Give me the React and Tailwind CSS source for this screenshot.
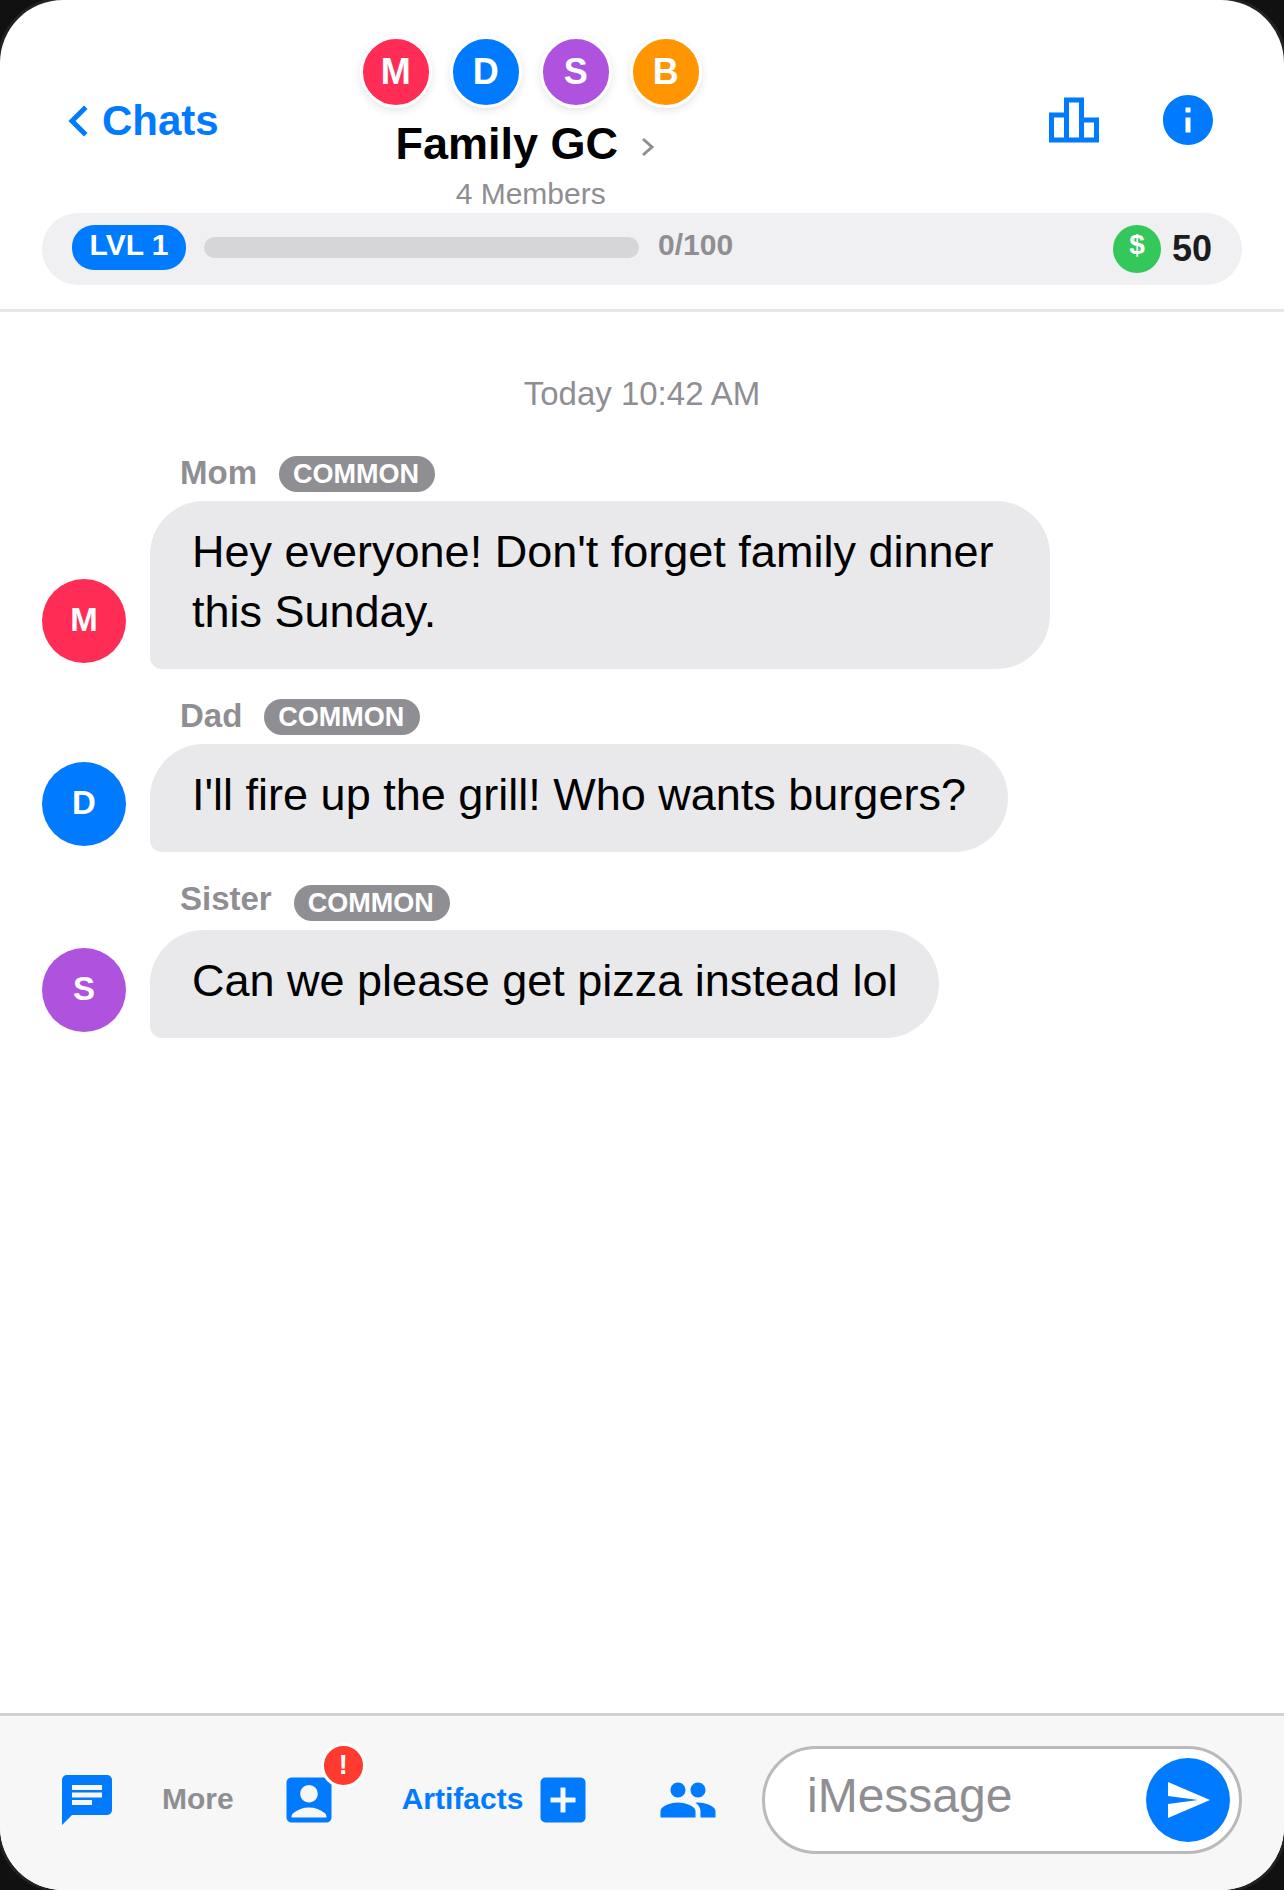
import React from 'react';
import { MdAccountBox, MdAddBox, MdChat, MdInfo, MdOutlineLeaderboard, MdPeople, MdSend } from 'react-icons/md';

const members = [
  { letter: 'M', color: 'bg-[#ff2d55]' },
  { letter: 'D', color: 'bg-[#007aff]' },
  { letter: 'S', color: 'bg-[#af52de]' },
  { letter: 'B', color: 'bg-[#ff9500]' },
];

const messages = [
  {
    name: 'Mom',
    letter: 'M',
    color: 'bg-[#ff2d55]',
    text: "Hey everyone! Don't forget family dinner this Sunday.",
    rowClass: 'mt-0',
    nameClass: 'mb-[2px]',
    headClass: 'mb-[9px]',
  },
  {
    name: 'Dad',
    letter: 'D',
    color: 'bg-[#007aff]',
    text: "I'll fire up the grill! Who wants burgers?",
    rowClass: 'mt-[30px]',
    nameClass: 'mb-[2px]',
    headClass: 'mb-[9px]',
  },
  {
    name: 'Sister',
    letter: 'S',
    color: 'bg-[#af52de]',
    text: 'Can we please get pizza instead lol',
    rowClass: 'mt-[30px]',
    nameClass: 'mb-[8px]',
    headClass: 'mb-[6px]',
  },
];

const Message = ({ message }) => (
  <div className={`flex items-end gap-[24px] ${message.rowClass}`}>
    <div className={`w-[84px] h-[84px] mb-[6px] shrink-0 rounded-full flex items-center justify-center text-white text-[33px] font-bold pb-[3px] ${message.color}`}>
      {message.letter}
    </div>
    <div className="flex flex-col items-start">
      <div className={`flex items-center pl-[30px] ${message.headClass}`}>
        <span className={`text-[33px] leading-[34px] font-bold text-[#8e8e93] mr-[22px] ${message.nameClass}`}>
          {message.name}
        </span>
        <span className="h-[36px] pl-[14px] pr-[16px] rounded-[18px] bg-[#8e8e93] text-white text-[27px] font-bold flex items-center">
          COMMON
        </span>
      </div>
      <div className="max-w-[900px] px-[42px] pt-[21px] pb-[27px] rounded-[54px] rounded-bl-[12px] bg-[#e9e9eb] text-black text-[45px] leading-[60px]">
        {message.text}
      </div>
    </div>
  </div>
);

export default function App() {
  return (
    <div className="w-[1284px] h-[1890px] bg-[#111111] font-['Liberation_Sans',Arial,sans-serif]">
      <div className="w-full h-full flex flex-col overflow-hidden rounded-[63px] bg-white shadow-[0_0_0_3px_#222222]">
        {/* Header */}
        <div className="h-[312px] shrink-0 border-b-[3px] border-[#e5e5ea] px-[42px]">
          <div className="h-[213px] flex items-start">
            <div className="flex items-center mt-[97px] ml-[24px] text-[#007aff]">
              <svg width="22" height="32" viewBox="0 0 22 32" fill="none" stroke="currentColor" strokeWidth="5" strokeLinecap="square">
                <path d="M18 4 L6 16 L18 28" />
              </svg>
              <span className="ml-[14px] text-[42px] leading-[48px] font-bold">Chats</span>
            </div>
            <div className="w-[342px] ml-[141px] mt-[36px] flex flex-col items-center">
              <div className="flex gap-[18px]">
                {members.map((member) => (
                  <div
                    key={member.letter}
                    className={`w-[72px] h-[72px] rounded-full border-[3px] border-white shadow-[0_3px_8px_rgba(0,0,0,0.1)] flex items-center justify-center text-white text-[36px] font-bold ${member.color}`}
                  >
                    {member.letter}
                  </div>
                ))}
              </div>
              <div className="flex items-center mt-[9px] -ml-[11px]">
                <span className="text-[45px] leading-[54px] font-bold text-black whitespace-nowrap">Family GC</span>
                <svg className="ml-[23px] mt-[5px]" width="14" height="20" viewBox="0 0 14 20" fill="none" stroke="#8e8e93" strokeWidth="3">
                  <path d="M2 2 L11 10 L2 18" />
                </svg>
              </div>
              <div className="text-[30px] leading-[36px] text-[#8e8e93] mt-[5px] whitespace-nowrap">4 Members</div>
            </div>
            <div className="flex items-center gap-[54px] ml-auto mr-[24px] mt-[90px] text-[#007aff]">
              <MdOutlineLeaderboard size={60} />
              <MdInfo size={60} />
            </div>
          </div>

          {/* Level bar */}
          <div className="h-[72px] rounded-[36px] bg-[#f0f0f2] flex items-center pl-[30px] pr-[30px]">
            <div className="w-[114px] h-[45px] mb-[3px] rounded-[22px] bg-[#007aff] text-white text-[30px] font-bold flex items-center justify-center pb-[6px]">
              LVL 1
            </div>
            <div className="w-[435px] h-[21px] mb-[3px] ml-[18px] rounded-full bg-[#d6d6d8]" />
            <div className="ml-[19px] text-[30px] leading-[36px] font-bold text-[#8e8e93] pb-[8px]">0/100</div>
            <div className="ml-auto w-[48px] h-[48px] rounded-full bg-[#34c759] text-white text-[28px] font-bold flex items-center justify-center pb-[8px]">
              $
            </div>
            <div className="ml-[11px] text-[36px] font-bold text-[#1c1c1e]">50</div>
          </div>
        </div>

        {/* Messages */}
        <div className="flex-1 px-[42px] pt-[62px]">
          <div className="text-center text-[33px] leading-[40px] text-[#8e8e93] mb-[42px]">Today 10:42 AM</div>
          {messages.map((message) => (
            <Message key={message.name} message={message} />
          ))}
        </div>

        {/* Bottom bar */}
        <div className="h-[177px] shrink-0 border-t-[3px] border-[#d1d1d6] bg-[#f7f7f7] flex items-center pb-[6px] pl-[57px] pr-[42px]">
          <MdChat size={60} className="text-[#007aff]" />
          <span className="ml-[45px] text-[30px] font-bold text-[#8e8e93] pb-[3px]">More</span>
          <div className="relative ml-[45px] text-[#007aff]">
            <MdAccountBox size={60} />
            <span className="absolute -top-[27px] left-[42px] w-[45px] h-[45px] rounded-full border-[3px] border-white bg-[#ff3b30] text-white text-[27px] font-bold flex items-center justify-center">
              !
            </span>
          </div>
          <span className="ml-[63px] text-[30px] font-bold text-[#007aff] pb-[3px]">Artifacts</span>
          <MdAddBox size={60} className="ml-[10px] text-[#007aff]" />
          <MdPeople size={60} className="ml-[65px] text-[#007aff]" />
          <div className="ml-auto w-[480px] h-[108px] rounded-[54px] border-[3px] border-[#b9b9be] bg-white flex items-center pl-[42px] pr-[9px]">
            <span className="text-[48px] text-[#8e8e93] pb-[8px]">iMessage</span>
            <div className="ml-auto w-[84px] h-[84px] rounded-full bg-[#007aff] flex items-center justify-center text-white">
              <MdSend size={48} />
            </div>
          </div>
        </div>
      </div>
    </div>
  );
}
